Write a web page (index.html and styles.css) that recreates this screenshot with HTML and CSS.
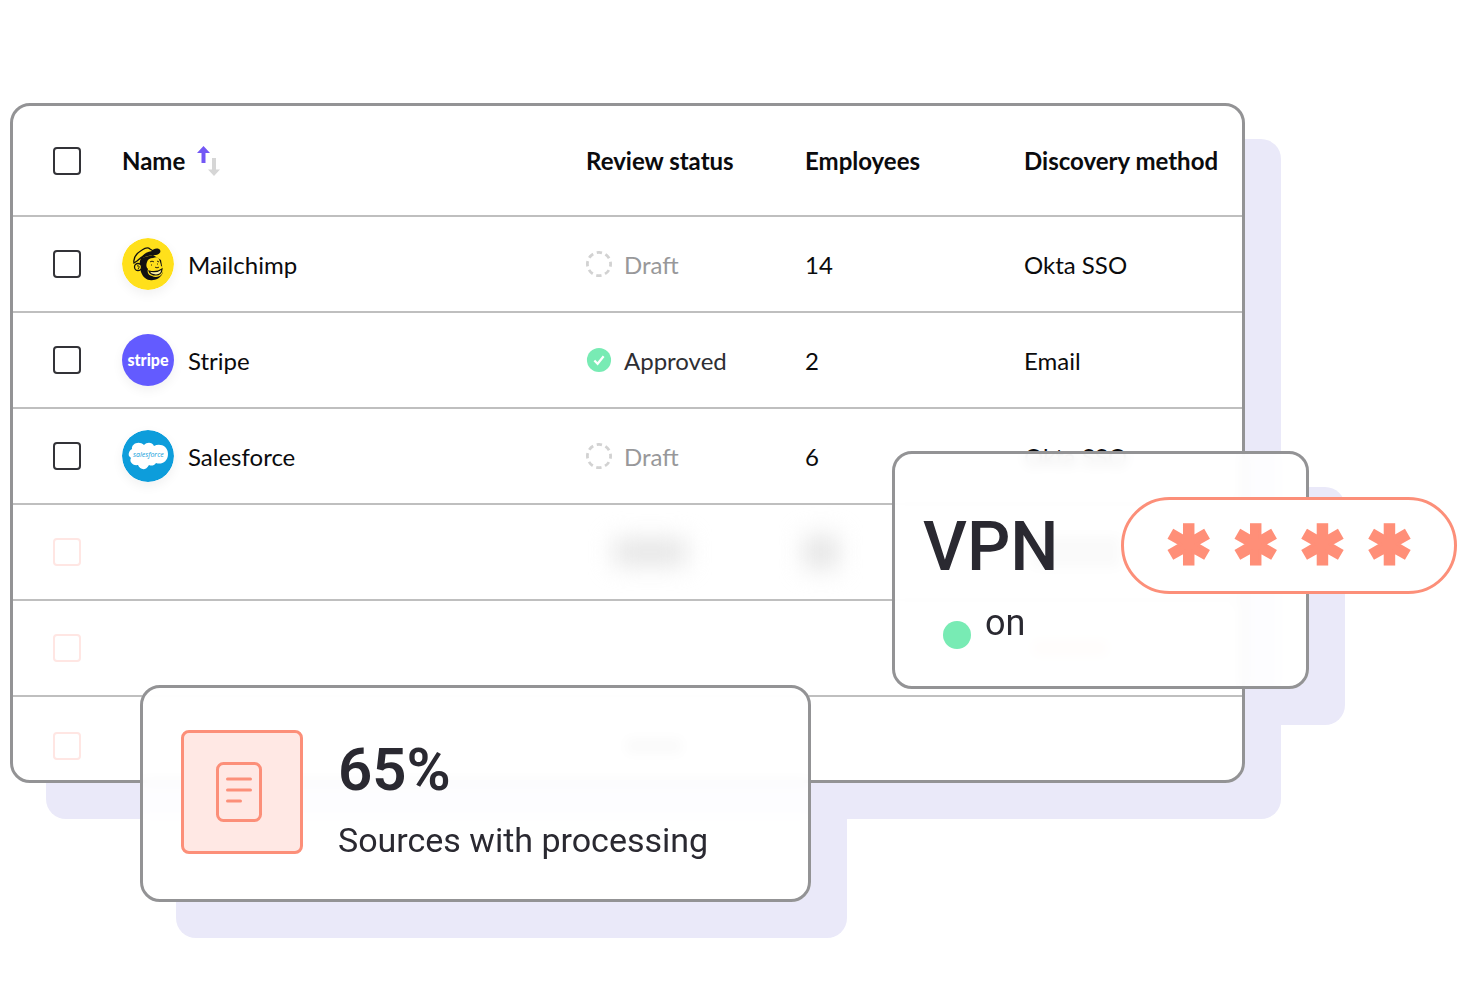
FILE: index.html
```
<!DOCTYPE html>
<html lang="en">
<head>
  <meta charset="UTF-8" />
  <meta name="viewport" content="width=device-width, initial-scale=1.0">
  <title>Sources</title>
  <link rel="stylesheet" href="styles.css">
</head>
<body>
  <main>
    <div class="shadowed">
      <div class="card table-card">
        <table>
          <thead>
            <tr>
              <th class="check-col"><input type="checkbox" aria-label="Select all"></th>
              <th>
                <div class="cell header-cell">Name
                  <svg class="sort" width="24" height="32" viewBox="0 0 24 32">
                    <path d="M6.500 1l6.500 7H8.500v10h-4V8H0z" fill="#7357f5" />
                    <path d="M17 31l-6-6.500h4V13h4v11.500h4z" fill="#d6d6d6" />
                  </svg>
                </div>
              </th>
              <th class="data-col">Review status</th>
              <th class="data-col">Employees</th>
              <th class="last-col">Discovery method</th>
            </tr>
          </thead>
          <tbody>
            <tr>
              <td><input type="checkbox" aria-label="Select Mailchimp"></td>
              <td>
                <div class="cell">
                  <svg class="logo" viewBox="0 0 52 52">
                    <circle cx="26" cy="26" r="26" fill="#ffe01b" />
                    <path d="M19 20c-2 4-2 9 0 14 2 6 7 9 12 8 5 0 9-4 10-8l-2-12-8-5z" fill="#111" />
                    <path d="M25 24c1-3 3-4 6-4 3-1 5-1 6 1 1 3 2 5 2 7 3 1 3 5 1 8-2 3-7 4-10 2-4-1-5-4-4-7-2-2-2-4-1-7z" fill="#ffe01b" />
                    <path d="M12 25c-1-5 3-10 8-13 3-2 6-3 8-1l5 3c-7 1-12 3-18 9z" fill="#ffe01b" stroke="#111" stroke-width="1.300" />
                    <path d="M19 21c1-4 5-7 11-8 1-2 4-3 7-2 3 2 1 5-3 6-6 0-10 1-15 4z" fill="#111" />
                    <circle cx="16" cy="29" r="3.500" fill="#ffe01b" stroke="#111" stroke-width="1.300" />
                    <path d="M15 28c2-1 3 1 1 3" fill="none" stroke="#111" />
                    <path d="M27 33c4 1 9 1 13-2 0 4-3 6-6 6-4 0-6-1-7-4z" fill="#fff3a0" stroke="#111" stroke-width="1.200" />
                    <path d="M28 24c1-1 3-1 4 0M35 23l2 1M29 27h1M35 26h1M33 29c1 1 3 1 4 0" fill="none" stroke="#111" stroke-width="0.900" />
                  </svg>
                  Mailchimp
                </div>
              </td>
              <td>
                <div class="cell status draft">
                  <svg width="26" height="26" viewBox="0 0 28 28"><circle cx="14" cy="14" r="12.500" fill="none" stroke="#d2d2d2" stroke-width="3" stroke-dasharray="5.800 4.020" stroke-dashoffset="2.900" /></svg>
                  Draft
                </div>
              </td>
              <td>14</td>
              <td>Okta SSO</td>
            </tr>
            <tr>
              <td><input type="checkbox" aria-label="Select Stripe"></td>
              <td>
                <div class="cell">
                  <span class="logo stripe">stripe</span>
                  Stripe
                </div>
              </td>
              <td>
                <div class="cell status approved">
                  <svg width="26" height="26" viewBox="0 0 28 28"><circle cx="14" cy="14" r="13" fill="#78ebb4" /><path d="M9 14.500l3.500 3.500 6.500-8" fill="none" stroke="#fff" stroke-width="2.400" /></svg>
                  Approved
                </div>
              </td>
              <td>2</td>
              <td>Email</td>
            </tr>
            <tr>
              <td><input type="checkbox" aria-label="Select Salesforce"></td>
              <td>
                <div class="cell">
                  <svg class="logo" viewBox="0 0 52 52">
                    <circle cx="26" cy="26" r="26" fill="#0d9ddb" />
                    <path d="M7 26c-1-3 1-6 3-7-1-5 7-9 12-4 3-3 8-3 10 1 6-3 14 0 14 8s-7 11-12 9c-2 3-5 3-7 2-3 6-9 5-11 0-6 1-9-4-7-7z" fill="#fff" />
                    <text x="11" y="27" class="salesforce">salesforce</text>
                  </svg>
                  Salesforce
                </div>
              </td>
              <td>
                <div class="cell status draft">
                  <svg width="26" height="26" viewBox="0 0 28 28"><circle cx="14" cy="14" r="12.500" fill="none" stroke="#d2d2d2" stroke-width="3" stroke-dasharray="5.800 4.020" stroke-dashoffset="2.900" /></svg>
                  Draft
                </div>
              </td>
              <td>6</td>
              <td>Okta SSO</td>
            </tr>
            <tr class="faded">
              <td><input type="checkbox" aria-label="Select row 4"></td>
              <td></td>
              <td><div class="smudge wide"></div></td>
              <td><div class="smudge"></div></td>
              <td><div class="hidden-text"></div></td>
            </tr>
            <tr class="faded">
              <td><input type="checkbox" aria-label="Select row 5"></td>
              <td></td>
              <td></td>
              <td></td>
              <td><div class="hidden-text peach"></div></td>
            </tr>
            <tr class="faded">
              <td><input type="checkbox" aria-label="Select row 6"></td>
              <td></td>
              <td><div class="hidden-text short"></div></td>
              <td></td>
              <td></td>
            </tr>
          </tbody>
        </table>
      </div>
    </div>

    <section class="shadowed vpn">
      <div class="card glass vpn-card">
        <h2>VPN</h2>
        <p class="state"><span class="dot"></span>on</p>
      </div>
      <div class="pill"><span>✱</span><span>✱</span><span>✱</span><span>✱</span></div>
    </section>

    <section class="shadowed sources">
      <div class="card glass sources-card">
        <div class="doc">
          <svg width="46" height="60" viewBox="0 0 46 60" fill="none" stroke="#fc8f79" stroke-width="3" stroke-linecap="round">
            <rect x="1.500" y="1.500" width="43" height="57" rx="6" />
            <path d="M11.500 17h23M11.500 28h23M11.500 39h13" />
          </svg>
        </div>
        <div>
          <h2>65%</h2>
          <p>Sources with processing</p>
        </div>
      </div>
    </section>
  </main>
</body>
</html>
```
FILE: styles.css
```
* {
  box-sizing: border-box;
}
body {
  margin: 0;
  font-family: Lato, sans-serif;
  font-size: 24px;
  background-color: #fff;
  color: #0b0b0d;
}
main {
  position: relative;
  min-height: 100vh;
  padding: 103px 225px 103px 10px;
}
h2, p {
  margin: 0;
}

/* Cards: the offset shadow sits under every card */
.shadowed {
  position: relative;
}
.shadowed::before {
  content: "";
  position: absolute;
  z-index: -1;
  inset: 0;
  border-radius: 20px;
  box-shadow: 36px 36px 0 #eae9f9;
}
.card {
  border: 3px solid #939395;
  border-radius: 20px;
  background-color: #fff;
  overflow: hidden;
}
.glass {
  background-color: rgba(255,255,255,0.9);
  backdrop-filter: blur(6px);
  font-family: Roboto, sans-serif;
  color: #2a2931;
}

/* Table */
table {
  width: 100%;
  border-collapse: separate;
  border-spacing: 0;
  table-layout: fixed;
}
th, td {
  height: 96px;
  padding: 0;
  border-bottom: 2px solid #bfbfbf;
  text-align: left;
  white-space: nowrap;
}
th {
  height: 111px;
  font-weight: 700;
}
.check-col {
  width: 109px;
}
.data-col {
  width: 219px;
}
.last-col {
  width: 218px;
}
th:first-child, td:first-child {
  padding-left: 40px;
}
tbody tr:last-child td {
  height: 83px;
  padding-top: 14px;
  border-bottom: none;
}
input[type="checkbox"] {
  appearance: none;
  display: block;
  width: 28px;
  height: 28px;
  margin: 0;
  border: 2px solid #333338;
  border-radius: 4px;
  background-color: #fff;
}
.faded input[type="checkbox"] {
  border-color: #ffe6e3;
}
.cell {
  display: flex;
  align-items: center;
  gap: 14px;
}
.header-cell {
  gap: 12px;
}
.logo {
  width: 52px;
  height: 52px;
  border-radius: 50%;
  box-shadow: 0 4px 12px rgba(0,0,0,0.06);
}
.stripe {
  display: flex;
  align-items: center;
  justify-content: center;
  background-color: #635bff;
  color: #fff;
  font-family: Lato, sans-serif;
  font-size: 16px;
  font-weight: 900;
  line-height: 20px;
}
.salesforce {
  font-family: "Open Sans", sans-serif;
  font-size: 7px;
  font-style: italic;
  fill: #0d9ddb;
}
.status {
  gap: 12px;
}
.draft {
  color: #98989a;
}
.approved {
  color: #2e2e33;
}
.smudge {
  width: 32px;
  height: 32px;
  background-color: #e2e2e2;
  filter: blur(12px);
}
.smudge.wide {
  width: 72px;
  height: 24px;
  margin-left: 28px;
}
/* only seen through the glass cards */
.hidden-text {
  width: 88px;
  height: 32px;
  margin-left: 8px;
  background-color: #c8c8c8;
}
.hidden-text.peach {
  width: 76px;
  height: 16px;
  background-color: #ffe0d5;
}
.hidden-text.short {
  width: 56px;
  height: 16px;
  margin-left: 40px;
}

/* VPN card */
.vpn {
  position: absolute;
  top: 451px;
  right: 161px;
  width: 417px;
}
.vpn-card {
  min-height: 238px;
  padding: 53px 28px 35px;
}
.vpn-card h2 {
  font-size: 68px;
  line-height: 80px;
  font-weight: 500;
}
.state {
  display: flex;
  align-items: flex-start;
  gap: 14px;
  margin-top: 14px;
  padding-left: 20px;
  font-size: 36px;
  line-height: 44px;
}
.dot {
  width: 28px;
  height: 28px;
  margin-top: 20px;
  border-radius: 50%;
  background-color: #78ebb4;
}
.pill {
  position: absolute;
  top: 46px;
  right: -148px;
  display: flex;
  align-items: center;
  justify-content: space-between;
  width: 336px;
  height: 97px;
  padding: 0 42px;
  border: 3px solid #fc8f79;
  border-radius: 49px;
  background-color: #fff;
  color: #ff8f78;
  font-family: "DejaVu Sans", sans-serif;
  font-size: 54px;
  line-height: 60px;
  -webkit-text-stroke: 3px #ff8f78;
}

/* Sources card */
.sources {
  position: absolute;
  top: 685px;
  left: 140px;
  width: 671px;
}
.sources-card {
  display: flex;
  gap: 35px;
  min-height: 217px;
  padding: 42px 38px 34px;
}
.doc {
  display: flex;
  align-items: center;
  justify-content: center;
  width: 122px;
  height: 124px;
  padding-right: 6px;
  border: 3px solid #fc8f79;
  border-radius: 8px;
  background-color: #ffe8e4;
}
.sources-card h2 {
  font-size: 60px;
  line-height: 80px;
  font-weight: 600;
}
.sources-card p {
  margin-top: 6px;
  font-size: 34px;
  line-height: 48px;
}
```
